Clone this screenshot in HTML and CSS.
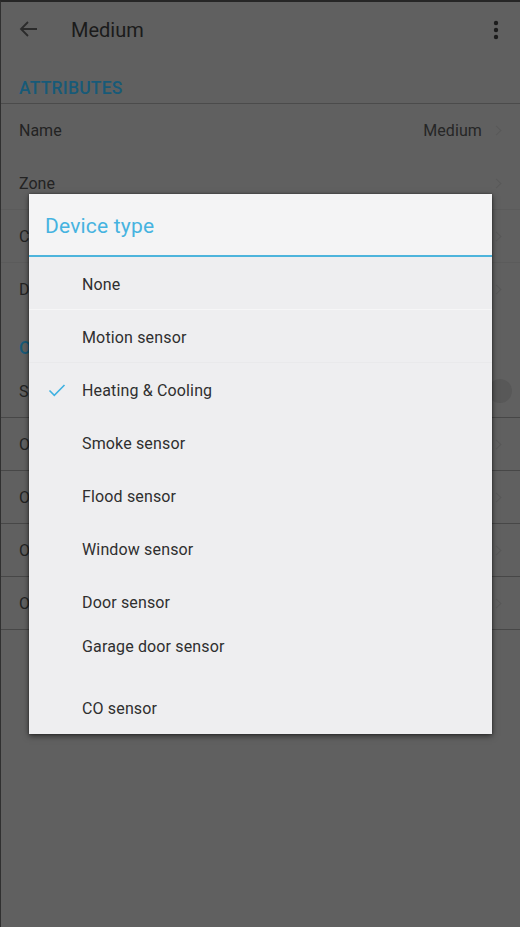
FILE: index.html
```html
<!DOCTYPE html>
<html>
<head>
<meta charset="utf-8">
<link rel="stylesheet" href="styles.css">
</head>
<body>
<div class="screen">
  <header class="appbar">
    <svg class="back" width="24" height="24" viewBox="0 0 24 24"><path d="M20 12H5M11 5l-7 7 7 7" fill="none" stroke="#2b2b2b" stroke-width="1.8"/></svg>
    <div class="title">Medium</div>
    <svg class="kebab" width="8" height="24" viewBox="0 0 8 24"><circle cx="4" cy="5" r="2.2" fill="#1c1c1c"/><circle cx="4" cy="12" r="2.2" fill="#1c1c1c"/><circle cx="4" cy="19" r="2.2" fill="#1c1c1c"/></svg>
  </header>

  <div class="section">ATTRIBUTES</div>
  <div class="list attrs">
    <div class="row"><span>Name</span><span class="value">Medium</span><span class="chev"></span></div>
    <div class="row"><span>Zone</span><span class="chev"></span></div>
    <div class="row"><span>C</span><span class="chev"></span></div>
    <div class="row"><span>D</span><span class="chev"></span></div>
  </div>

  <div class="section sec2">O</div>
  <div class="list opts">
    <div class="row"><span>S</span><span class="switch"></span></div>
    <div class="row"><span>O</span><span class="chev"></span></div>
    <div class="row"><span>O</span><span class="chev"></span></div>
    <div class="row"><span>O</span><span class="chev"></span></div>
    <div class="row"><span>O</span><span class="chev"></span></div>
  </div>

  <div class="dialog">
    <div class="dialog-head">Device type</div>
    <ul class="choices">
      <li class="choice sep"><span class="check"></span>None</li>
      <li class="choice sep faint"><span class="check"></span>Motion sensor</li>
      <li class="choice"><span class="check"><svg width="18" height="14" viewBox="0 0 18 14"><path d="M1.5 7.5l4.8 4.8L16.5 2" fill="none" stroke="#3fb1e1" stroke-width="1.6"/></svg></span>Heating &amp; Cooling</li>
      <li class="choice"><span class="check"></span>Smoke sensor</li>
      <li class="choice"><span class="check"></span>Flood sensor</li>
      <li class="choice"><span class="check"></span>Window sensor</li>
      <li class="choice"><span class="check"></span>Door sensor</li>
      <li class="choice raised"><span class="check"></span>Garage door sensor</li>
      <li class="choice"><span class="check"></span>CO sensor</li>
    </ul>
  </div>
</div>
</body>
</html>
```
FILE: styles.css
```css
* { box-sizing: border-box; }
html, body { margin: 0; padding: 0; }
body {
  width: 520px;
  height: 927px;
  overflow: hidden;
  background: #606060;
  font-family: Roboto, "Noto Sans", sans-serif;
}
.screen {
  position: relative;
  height: 927px;
  border-top: 2px solid #262626;
  border-left: 1px solid #303030;
  background: #606060;
}
.appbar {
  height: 56px;
  display: flex;
  align-items: center;
  padding: 0 0 0 16px;
}
.back { margin-right: 30px; margin-top: -2px; }
.title {
  flex: 1;
  font-size: 20px;
  color: #1b1b1b;
  margin-top: -1px;
}
.kebab { margin-right: 20px; margin-top: -1px; }

.section {
  height: 46px;
  padding: 20px 0 0 18px;
  font-size: 17.5px;
  font-weight: 500;
  color: #175a78;
  letter-spacing: 0.2px;
  border-bottom: 1px solid #4b4b4b;
}
.sec2 { border-bottom: none; height: 49px; padding-top: 22px; }
.list { display: flex; flex-direction: column; }
.row {
  height: 53px;
  display: flex;
  align-items: center;
  padding: 0 0 0 18px;
  font-size: 16px;
  color: #232323;
}
.attrs .row { border-bottom: 1px solid #5b5b5b; }
.attrs .row:first-child { border-bottom-color: #606060; }
.attrs .row:last-child { border-bottom: none; }
.opts .row { border-bottom: 1px solid #474747; }
.row span:first-child { flex: 1; }
.value { color: #262626; margin-right: 11px; letter-spacing: 0.1px; }
.chev {
  width: 7px;
  height: 7px;
  border-top: 1.5px solid #585858;
  border-right: 1.5px solid #585858;
  transform: rotate(45deg);
  margin-right: 20px;
}
.switch {
  width: 24px;
  height: 24px;
  border-radius: 50%;
  background: #585858;
  margin-right: 8px;
}

.dialog {
  position: absolute;
  left: 28px;
  top: 192px;
  width: 463px;
  height: 540px;
  background: #eeeef0;
  box-shadow: 0 2px 6px rgba(0,0,0,0.55), 0 0 2px rgba(0,0,0,0.4);
  display: flex;
  flex-direction: column;
}
.dialog-head {
  height: 63px;
  background: #f4f4f5;
  border-bottom: 2px solid #4db4dc;
  padding: 20px 0 0 16px;
  font-size: 21px;
  letter-spacing: 0.2px;
  color: #46b3e0;
}
.choices { list-style: none; margin: 0; padding: 0; }
.choice {
  height: 53px;
  display: flex;
  align-items: center;
  font-size: 16px;
  color: #2f2f2f;
  padding-left: 19px;
  padding-top: 2px;
  letter-spacing: 0.15px;
}
.choice.sep { border-bottom: 1px solid #f6f6f7; }
.choice.faint { border-bottom-color: #e9e9eb; }
.choice.raised { padding-bottom: 18px; }
.check {
  width: 34px;
  display: flex;
  align-items: center;
  margin-top: -1px;
}
```
